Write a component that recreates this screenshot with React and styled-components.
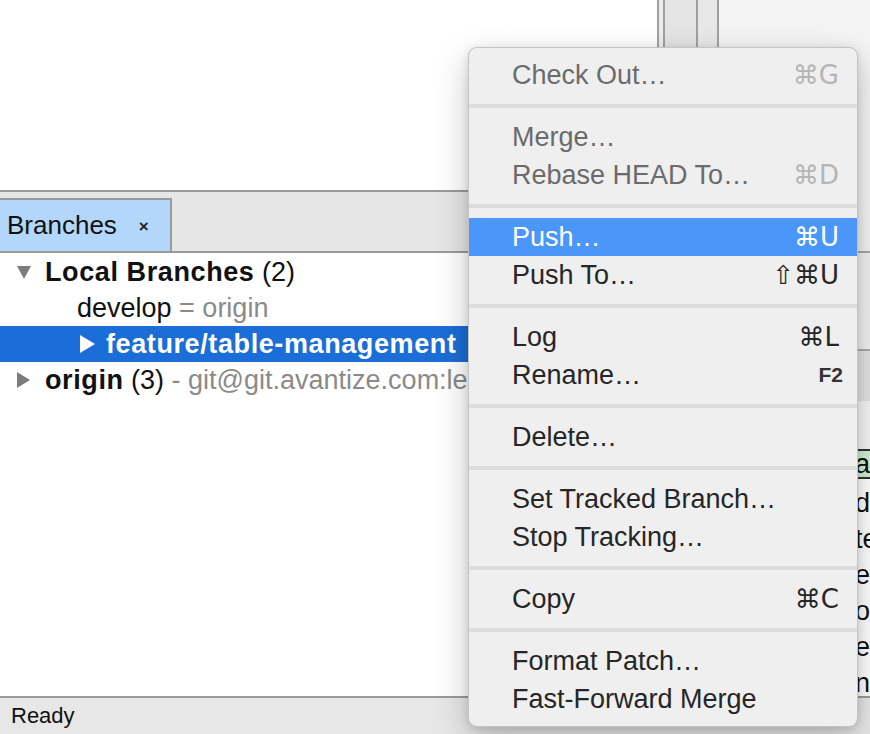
import React from 'react';
import styled, { createGlobalStyle, css } from 'styled-components';

const GlobalStyle = createGlobalStyle`
  html, body {
    margin: 0;
    padding: 0;
    overflow: hidden;
    background: #ffffff;
  }
  * {
    box-sizing: border-box;
  }
  body {
    font-family: "Liberation Sans", Arial, sans-serif;
    -webkit-font-smoothing: antialiased;
  }
`;

const Window = styled.div`
  position: relative;
  width: 870px;
  height: 734px;
  display: flex;
  flex-direction: column;
  overflow: hidden;
`;

const Main = styled.div`
  flex: 1;
  display: flex;
  min-height: 0;
`;

const LeftPane = styled.div`
  width: 657px;
  flex-shrink: 0;
  display: flex;
  flex-direction: column;
`;

const LogArea = styled.div`
  height: 190px;
  background: #ffffff;
`;

const TabBar = styled.div`
  height: 63px;
  display: flex;
  align-items: flex-end;
  background: #e6e6e6;
  border-top: 2px solid #9a9a9a;
  border-bottom: 2px solid #9a9a9a;
`;

const Tab = styled.div`
  width: 172px;
  height: 53px;
  display: flex;
  align-items: center;
  gap: 22px;
  padding-left: 7px;
  background: #b3d7fb;
  border-top: 2px solid #9a9a9a;
  border-right: 2px solid #9a9a9a;
  font-size: 26px;
  color: #111;
`;

const TabClose = styled.span`
  font-size: 17px;
  font-weight: bold;
  color: #222;
  padding-top: 2px;
`;

const Tree = styled.div`
  flex: 1;
  background: #ffffff;
  padding-top: 1px;
`;

const TreeRow = styled.div`
  height: 36px;
  display: flex;
  align-items: center;
  padding-left: ${(p) => p.$indent}px;
  font-size: 27px;
  white-space: nowrap;
  color: #111;
  ${(p) =>
    p.$selected &&
    css`
      background: #1b6ed7;
      color: #ffffff;
    `}
`;

const Disclosure = styled.svg`
  width: ${(p) => p.$w}px;
  height: ${(p) => p.$h}px;
  margin-right: ${(p) => p.$gap}px;
  flex-shrink: 0;
`;

const Bold = styled.span`
  font-weight: bold;
  letter-spacing: 0.6px;
`;

const Muted = styled.span`
  color: #8a8a8a;
`;

const Splitter = styled.div`
  width: 62px;
  flex-shrink: 0;
  display: flex;
  border-left: 2px solid #a0a0a0;
  border-right: 2px solid #a0a0a0;
  background: #e6e6e6;
`;

const SplitCol = styled.div`
  width: ${(p) => p.$w}px;
  background: ${(p) => p.$bg};
  border-right: ${(p) => (p.$line ? '2px solid #a0a0a0' : 'none')};
`;

const RightPane = styled.div`
  flex: 1;
  min-width: 0;
  overflow: hidden;
  display: flex;
  flex-direction: column;
  background: #f4f4f4;
`;

const RightBlock = styled.div`
  height: ${(p) => p.$h}px;
  flex-shrink: 0;
  background: ${(p) => p.$bg};
  border-bottom: ${(p) => (p.$line ? '2px solid #a8a8a8' : 'none')};
`;

const DiffList = styled.div`
  flex: 1;
  background: #ffffff;
`;

const DiffRow = styled.div`
  height: 36px;
  display: flex;
  align-items: center;
  padding-left: 136px;
  font-size: 27px;
  color: #111;
  white-space: nowrap;
  ${(p) =>
    p.$tag &&
    css`
      height: 30px;
      margin: 0 0 6px;
      background: #d3f0d3;
      border-top: 2px solid #333;
      border-bottom: 2px solid #333;
    `}
`;

const StatusBar = styled.div`
  height: 38px;
  display: flex;
  align-items: center;
  padding-left: 11px;
  background: #e7e7e7;
  border-top: 2px solid #9a9a9a;
  font-size: 22px;
  color: #111;
`;

const Menu = styled.div`
  position: absolute;
  left: 468px;
  top: 47px;
  width: 390px;
  padding: 8px 0;
  background: #efefef;
  border: 1px solid rgba(0, 0, 0, 0.18);
  border-radius: 9px;
  box-shadow: 0 12px 34px rgba(0, 0, 0, 0.22), 0 2px 8px rgba(0, 0, 0, 0.12);
`;

const Item = styled.div`
  height: 38px;
  display: flex;
  align-items: center;
  justify-content: space-between;
  padding: 0 18px 0 43px;
  font-size: 27px;
  color: ${(p) => (p.$disabled ? '#6b6b6b' : '#262626')};
  ${(p) =>
    p.$active &&
    css`
      background: #4a97f9;
      color: #ffffff;
    `}
`;

const Shortcut = styled.span`
  font-family: "DejaVu Sans", "Liberation Sans", sans-serif;
  font-size: 26px;
  color: ${(p) => (p.$disabled ? '#b5b5b5' : 'inherit')};
  ${(p) =>
    p.$small &&
    css`
      font-family: "Liberation Sans", sans-serif;
      font-size: 21px;
      font-weight: bold;
      margin-right: -4px;
      color: #333;
    `}
`;

const Separator = styled.div`
  height: 4px;
  margin: 10px 0;
  background: #dcdcdc;
`;

const TriangleDown = ({ gap }) => (
  <Disclosure $w={14} $h={13} $gap={gap} viewBox="0 0 14 13">
    <polygon points="0,0 14,0 7,13" fill="#7d7d7d" />
  </Disclosure>
);

const TriangleRight = ({ gap, color, w, h }) => (
  <Disclosure $w={w} $h={h} $gap={gap} viewBox={`0 0 ${w} ${h}`}>
    <polygon points={`0,0 ${w},${h / 2} 0,${h}`} fill={color} />
  </Disclosure>
);

const menuGroups = [
  [{ label: 'Check Out…', key: '⌘G', disabled: true }],
  [
    { label: 'Merge…', disabled: true },
    { label: 'Rebase HEAD To…', key: '⌘D', disabled: true },
  ],
  [
    { label: 'Push…', key: '⌘U', active: true },
    { label: 'Push To…', key: '⇧⌘U' },
  ],
  [
    { label: 'Log', key: '⌘L' },
    { label: 'Rename…', key: 'F2', small: true },
  ],
  [{ label: 'Delete…' }],
  [{ label: 'Set Tracked Branch…' }, { label: 'Stop Tracking…' }],
  [{ label: 'Copy', key: '⌘C' }],
  [{ label: 'Format Patch…' }, { label: 'Fast-Forward Merge' }],
];

const diffRows = ['ab', 'd', 'te', 'er', 'ol', 'er', 'nc'];

export default function App() {
  return (
    <>
      <GlobalStyle />
      <Window>
        <Main>
          <LeftPane>
            <LogArea />
            <TabBar>
              <Tab>
                Branches
                <TabClose>×</TabClose>
              </Tab>
            </TabBar>
            <Tree>
              <TreeRow $indent={17}>
                <TriangleDown gap={14} />
                <Bold>Local Branches</Bold>&nbsp;(2)
              </TreeRow>
              <TreeRow $indent={77}>
                develop&nbsp;<Muted>= origin</Muted>
              </TreeRow>
              <TreeRow $indent={80} $selected>
                <TriangleRight gap={11} color="#ffffff" w={15} h={18} />
                <Bold>feature/table-management</Bold>
              </TreeRow>
              <TreeRow $indent={17}>
                <TriangleRight gap={15} color="#7d7d7d" w={13} h={16} />
                <Bold>origin</Bold>&nbsp;(3)&nbsp;
                <Muted>- git@git.avantize.com:le</Muted>
              </TreeRow>
            </Tree>
          </LeftPane>
          <Splitter>
            <SplitCol $w={6} $bg="#ececec" $line />
            <SplitCol $w={33} $bg="#e4e4e4" $line />
            <SplitCol $w={17} $bg="#e8e8e8" />
          </Splitter>
          <RightPane>
            <RightBlock $h={253} $bg="#f4f4f4" $line />
            <RightBlock $h={98} $bg="#f2f2f2" $line />
            <RightBlock $h={50} $bg="#e4e4e4" />
            <DiffList>
              <RightBlock $h={48} $bg="#f6f6f6" />
              {diffRows.map((text, i) => (
                <DiffRow key={i} $tag={i === 0}>
                  {text}
                </DiffRow>
              ))}
            </DiffList>
          </RightPane>
        </Main>
        <StatusBar>Ready</StatusBar>
        <Menu>
          {menuGroups.map((group, gi) => (
            <React.Fragment key={gi}>
              {gi > 0 && <Separator />}
              {group.map((item) => (
                <Item key={item.label} $disabled={item.disabled} $active={item.active}>
                  <span>{item.label}</span>
                  {item.key && (
                    <Shortcut $disabled={item.disabled} $small={item.small}>
                      {item.key}
                    </Shortcut>
                  )}
                </Item>
              ))}
            </React.Fragment>
          ))}
        </Menu>
      </Window>
    </>
  );
}
